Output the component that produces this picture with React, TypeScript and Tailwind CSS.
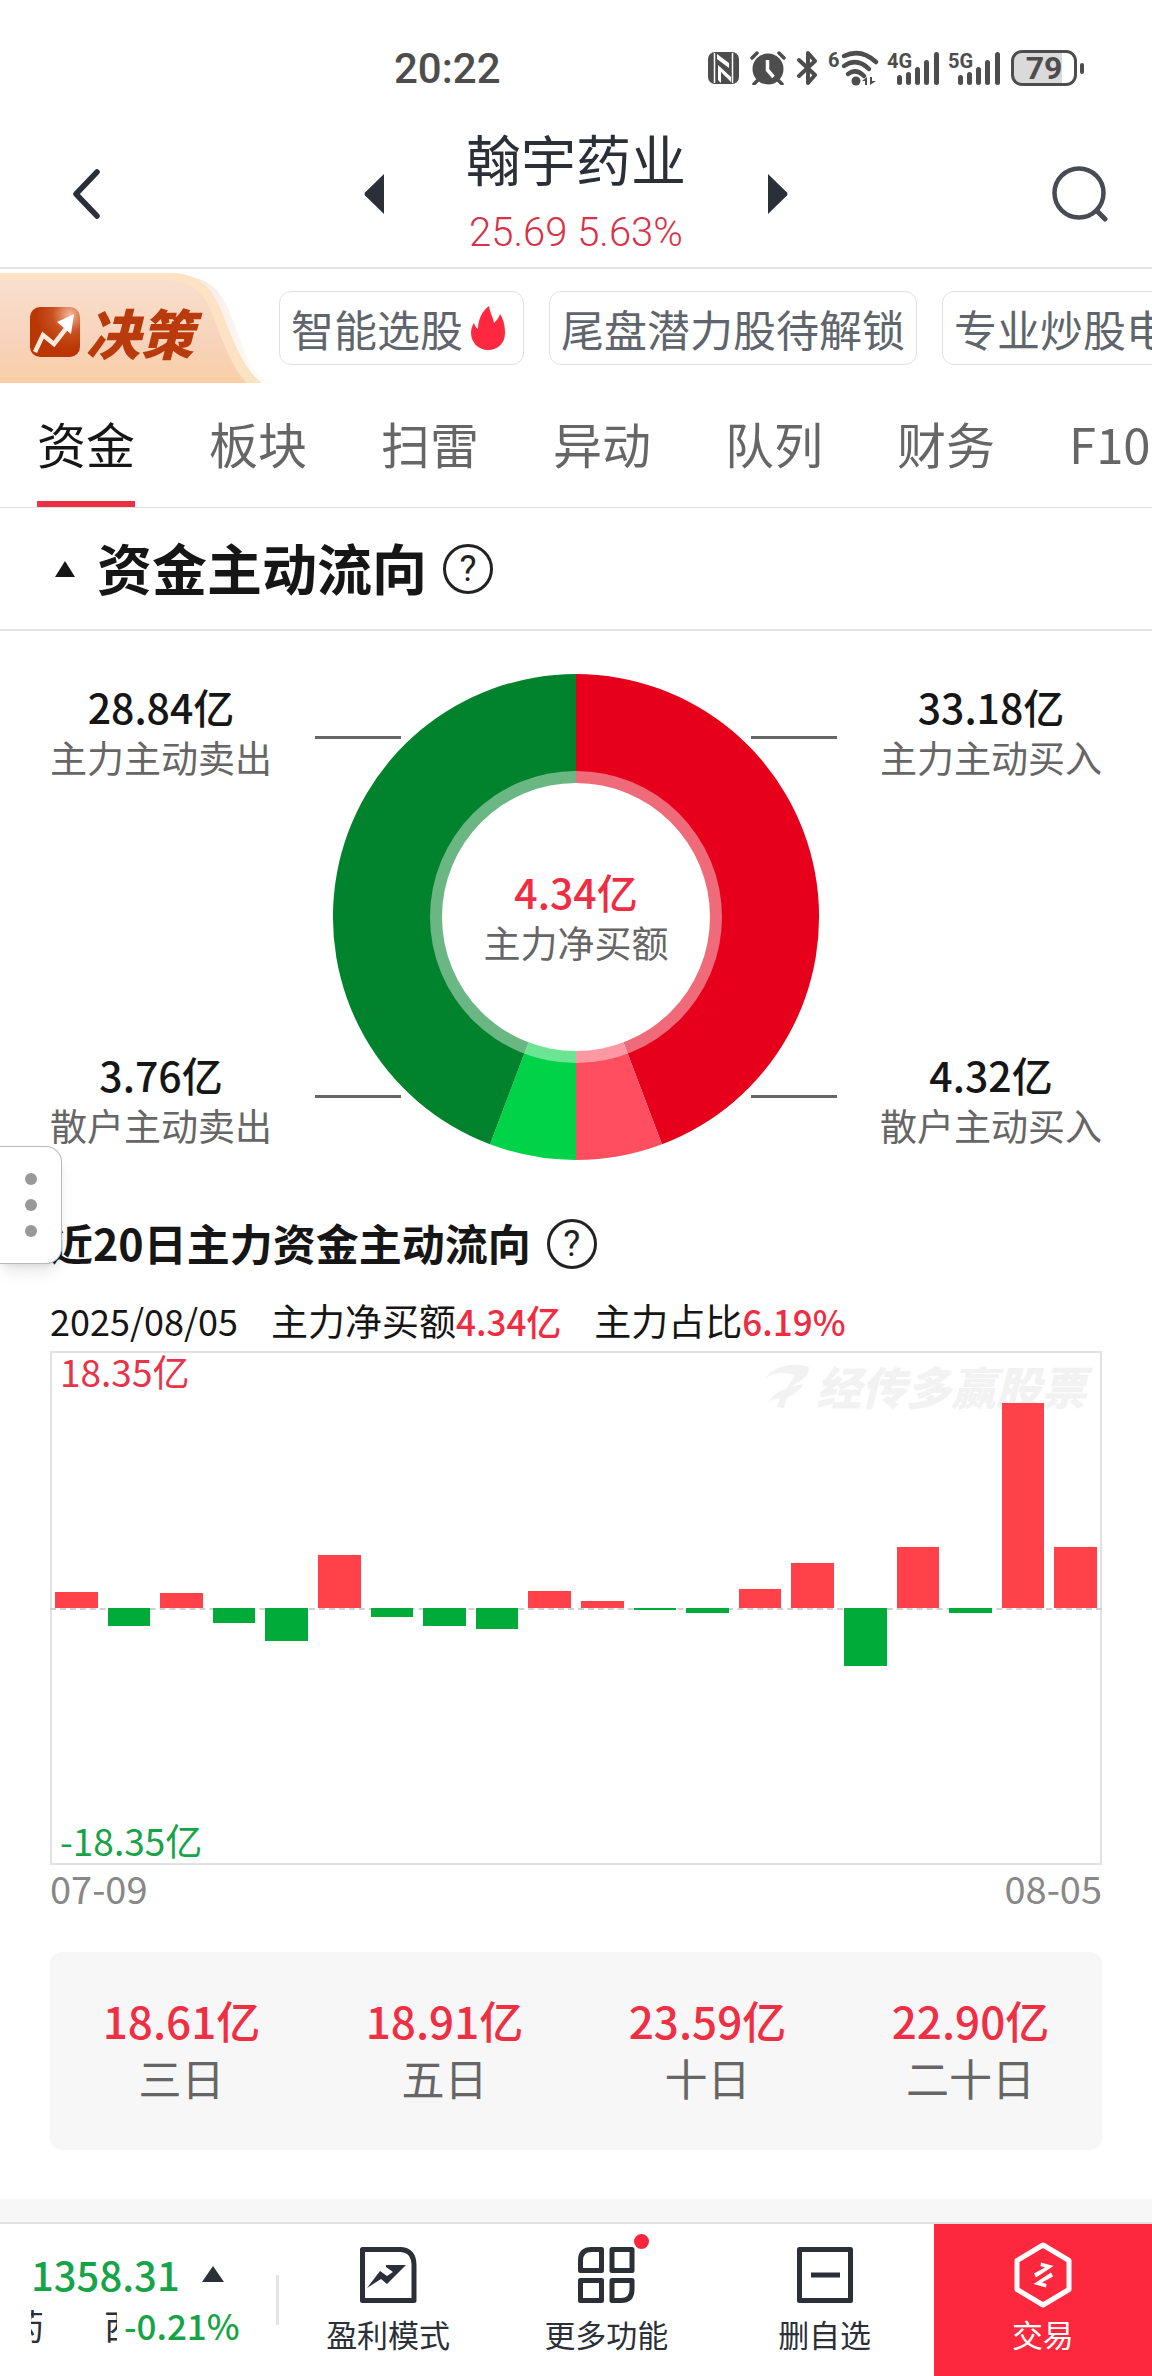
import { ReactNode } from "react";

const PROMOS = [
  { label: "智能选股", hot: true },
  { label: "尾盘潜力股待解锁", hot: false },
  { label: "专业炒股电脑版", hot: false },
];

const TABS = ["资金", "板块", "扫雷", "异动", "队列", "财务", "F10"];

// daily net inflow in 亿, oldest first
const FLOWS = [
  1.15, -1.3, 1.1, -1.05, -2.35, 3.78, -0.65, -1.25, -1.5, 1.24, 0.5, -0.15,
  -0.33, 1.38, 3.24, -4.15, 4.36, -0.35, 14.62, 4.34,
];
const FLOW_MAX = 18.35;

const TOTALS = [
  { value: "18.61亿", label: "三日" },
  { value: "18.91亿", label: "五日" },
  { value: "23.59亿", label: "十日" },
  { value: "22.90亿", label: "二十日" },
];

function SignalBars({ network }: { network: string }) {
  return (
    <svg viewBox="0 0 50 35" className="h-[35px] w-[50px] overflow-visible" fill="#4d4d4d" aria-hidden="true">
      <text x="-2" y="17" fontSize="20" fontWeight="700">{network}</text>
      <rect x="8" y="24" width="5" height="10" rx="2.5" />
      <rect x="17" y="21" width="5" height="13" rx="2.5" />
      <rect x="26" y="16" width="5" height="18" rx="2.5" />
      <rect x="35" y="9" width="5" height="25" rx="2.5" />
      <rect x="45" y="1" width="5" height="33" rx="2.5" />
    </svg>
  );
}

function StatusBar() {
  return (
    <div className="flex h-[110px] items-center justify-between pt-[26px] pr-[68px] pl-[394px] font-['Roboto',sans-serif] text-[#4d4d4d]">
      <span className="text-[42px] font-medium">20:22</span>
      <div className="flex items-center gap-[11px]">
        <svg viewBox="0 0 31 32" className="h-8 w-[31px]" aria-hidden="true">
          <rect width="31" height="32" rx="7" fill="#4d4d4d" />
          <path d="M6.500 1v30M24.500 1v30" stroke="#fff" strokeWidth="1.500" />
          <path d="M9 2l12 9v5L9 7zM10 13l13 12v5L13 20v11l-3-3z" fill="#fff" />
        </svg>
        <svg viewBox="0 0 36 34" className="h-[34px] w-9" aria-hidden="true">
          <circle cx="18" cy="18" r="15.500" fill="#4d4d4d" />
          <path d="M2 7l5-5M34 7l-5-5M8 29l-4 4M28 29l4 4" stroke="#4d4d4d" strokeWidth="3.500" strokeLinecap="round" />
          <path d="M17.500 9v10l6 7" fill="none" stroke="#fff" strokeWidth="3.500" />
        </svg>
        <svg viewBox="0 0 22 34" className="h-[34px] w-[22px]" aria-hidden="true">
          <path d="M2 9l16 15-7 8V2l7 8L2 25" fill="none" stroke="#4d4d4d" strokeWidth="4" strokeLinejoin="round" strokeLinecap="round" />
        </svg>
        <svg viewBox="0 0 48 36" className="h-9 w-12 overflow-visible" aria-hidden="true">
          <text x="-2" y="17" fontSize="20" fontWeight="700" fill="#4d4d4d">6</text>
          <g fill="none" stroke="#4d4d4d" strokeWidth="4.500" strokeLinecap="round">
            <path d="M14 6q17-8 32 6" />
            <path d="M14 16q13-9 25 3" />
            <path d="M18 24q8-6 16 2" />
          </g>
          <circle cx="26" cy="31" r="4.500" fill="#4d4d4d" />
          <path d="M32 31l5-4v8h-2v-4zM40 35v-8h2v4h4z" fill="#4d4d4d" />
        </svg>
        <SignalBars network="4G" />
        <SignalBars network="5G" />
        <div className="flex items-center gap-[3px]">
          <span className="flex h-9 w-[66px] items-center justify-center rounded-[11px] border-[3px] border-[#4d4d4d] bg-linear-to-r from-[#dadada] from-80% to-white to-80% text-[32px] font-bold">
            79
          </span>
          <span className="h-[11px] w-1 rounded-full bg-[#4d4d4d]" />
        </div>
      </div>
    </div>
  );
}

function Header() {
  return (
    <header className="flex items-center justify-between border-b-2 border-[#e4e4e4] px-[44px] pt-3 pb-px">
      <button aria-label="返回" className="flex w-14 justify-end">
        <svg viewBox="0 0 28 50" className="h-[50px] w-7" fill="none" stroke="#2b3038" strokeWidth="5.500">
          <path d="M25 3L4 25l21 22" strokeLinecap="round" strokeLinejoin="round" />
        </svg>
      </button>
      <div className="flex items-center gap-[82px]">
        <button aria-label="上一只">
          <svg viewBox="0 0 20 40" className="h-10 w-5" fill="#2b3038">
            <path d="M20 0v40L1 21.500q-1-1.500 0-3z" />
          </svg>
        </button>
        <div className="text-center">
          <h1 className="text-[55px] leading-[70px] text-[#2b3038]">翰宇药业</h1>
          <p className="mt-2 font-['Roboto',sans-serif] text-[40px] leading-[66px] font-light text-[#d8324a]">
            25.69 5.63%
          </p>
        </div>
        <button aria-label="下一只">
          <svg viewBox="0 0 20 40" className="h-10 w-5" fill="#2b3038">
            <path d="M0 0v40l19-18.500q1-1.500 0-3z" />
          </svg>
        </button>
      </div>
      <button aria-label="搜索">
        <svg viewBox="0 0 56 56" className="size-14" fill="none" stroke="#484a54" strokeWidth="4.500">
          <circle cx="27" cy="27" r="24.500" />
          <path d="M45 45l8 8" strokeWidth="5" strokeLinecap="round" />
        </svg>
      </button>
    </header>
  );
}

function PromoStrip() {
  return (
    <div className="flex items-center overflow-hidden pt-1">
      <a href="#decision" className="relative mr-[5px] flex h-[110px] w-[274px] shrink-0 items-center gap-1.5 pt-2 pl-[30px]">
        <svg viewBox="0 0 274 110" className="absolute inset-0 h-full w-full" aria-hidden="true">
          <defs>
            <linearGradient id="tab" x1="0" y1="0" x2="0" y2="1">
              <stop offset="0" stopColor="#f8dfcd" />
              <stop offset="0.600" stopColor="#f8d3bb" />
              <stop offset="1" stopColor="#f8cfa6" />
            </linearGradient>
            <linearGradient id="glow" x1="0" y1="0" x2="1" y2="0">
              <stop offset="0" stopColor="#f3e7e0" />
              <stop offset="1" stopColor="#fff" />
            </linearGradient>
          </defs>
          <path d="M190 4c32 4 38 30 52 68 8 22 16 34 32 38h-20L180 8z" fill="url(#glow)" />
          <path d="M0 0h175c28 2 40 20 48 42 10 26 22 56 39 68H0z" fill="#fde2c3" />
          <path d="M0 7h168c28 2 38 18 45 36 10 26 20 54 34 67H0z" fill="url(#tab)" />
        </svg>
        <svg viewBox="0 0 50 50" className="relative size-[50px]" aria-hidden="true">
          <defs>
            <radialGradient id="mark" cx="0.800" cy="0.150" r="0.700">
              <stop offset="0" stopColor="#f5b795" />
              <stop offset="0.500" stopColor="#c8501f" />
              <stop offset="1" stopColor="#ba3605" />
            </radialGradient>
          </defs>
          <rect width="50" height="50" rx="10" fill="url(#mark)" />
          <path d="M5 45l8-17 11 9 14-18" fill="none" stroke="#fde9dc" strokeWidth="4.500" />
          <path d="M27 15l17-8-3 20z" fill="#fff" />
        </svg>
        <span className="relative text-[54px] leading-[60px] font-black text-[#b93a0c] italic">决策</span>
      </a>
      <div className="flex gap-[25px]">
        {PROMOS.map((promo) => (
          <a
            key={promo.label}
            href="#promo"
            className="flex h-[74px] shrink-0 items-center rounded-xl border border-[#e2e2e2] px-[11px] text-[43px] whitespace-nowrap text-[#5f656d]"
          >
            {promo.label}
            {promo.hot && (
              <svg viewBox="0 0 49 44" className="h-11 w-[49px]" aria-hidden="true">
                <path
                  d="M26 0c1 7 4 11 5 17 2-2 5-5 6-9 4 6 5 13 5 19 0 10-7 17-17 17S8 36 8 27c0-4 1-7 3-10 1 3 2 5 4 6 0-9 4-18 11-23z"
                  fill="#ff2840"
                />
              </svg>
            )}
          </a>
        ))}
      </div>
    </div>
  );
}

function Tabs() {
  return (
    <nav className="flex gap-[74px] overflow-hidden border-b border-[#e2e2e2] pl-[37px]">
      {TABS.map((tab, i) => (
        <button
          key={tab}
          className={
            i === 0
              ? "relative h-[124px] shrink-0 pb-1 text-[49px] text-[#161616]"
              : "h-[124px] shrink-0 pb-1 text-[49px] text-[#666]"
          }
        >
          {tab}
          {i === 0 && <span className="absolute inset-x-0 bottom-0 h-1.5 bg-[#ea3045]" />}
        </button>
      ))}
    </nav>
  );
}

function HelpButton() {
  return (
    <button
      aria-label="说明"
      className="flex size-[50px] items-center justify-center rounded-full border-[3px] border-[#222] font-['Roboto',sans-serif] text-[36px] leading-none text-[#222]"
    >
      ?
    </button>
  );
}

function Stat({ value, label }: { value: string; label: string }) {
  return (
    <div className="text-center leading-[51px]">
      <p className="text-[41px] font-medium text-[#161616]">{value}</p>
      <p className="text-[37px] text-[#666]">{label}</p>
    </div>
  );
}

function DonutChart() {
  return (
    <div className="flex justify-between px-[50px] pt-[42px]">
      <div className="flex flex-col justify-between pt-2 pb-2.5">
        <Stat value="28.84亿" label="主力主动卖出" />
        <Stat value="3.76亿" label="散户主动卖出" />
      </div>
      <div className="relative">
        <svg viewBox="0 0 522 488" className="h-[488px] w-[522px]" aria-hidden="true">
          <path d="M0 64.500h86M436 64.500h86M0 423.500h86M436 423.500h86" stroke="#666" strokeWidth="3" />
          <path d="M261 244V1a243 243 0 0 1 86 470.300z" fill="#e6001b" />
          <path d="M261 244l86 227.300A243 243 0 0 1 261 487z" fill="#ff4e60" />
          <path d="M261 244v243a243 243 0 0 1-86-15.700z" fill="#00d348" />
          <path d="M261 244l-86 227.300A243 243 0 0 1 261 1z" fill="#00832c" />
          <circle cx="261" cy="244" r="146" fill="#fff" fillOpacity="0.420" />
          <circle cx="261" cy="244" r="134" fill="#fff" />
        </svg>
        <div className="absolute inset-0 flex flex-col items-center justify-center leading-[51px]">
          <p className="text-[41px] font-medium text-[#f02c42]">4.34亿</p>
          <p className="text-[37px] text-[#666]">主力净买额</p>
        </div>
      </div>
      <div className="flex flex-col justify-between pt-2 pb-2.5">
        <Stat value="33.18亿" label="主力主动买入" />
        <Stat value="4.32亿" label="散户主动买入" />
      </div>
    </div>
  );
}

function FlowChart() {
  return (
    <div className="relative h-[514px]">
      <div className="absolute inset-0 border-2 border-[#e2e2e2]" />
      <div className="absolute top-2.5 right-4 flex items-center gap-1.5 text-[#f2f2f2]">
        <svg viewBox="0 0 46 46" className="size-[46px]" fill="currentColor" aria-hidden="true">
          <path d="M1 16C8 4 26-2 45 4c1 8-8 15-18 19 5 0 8-1 12-2-4 9-12 11-16 14l-3 10-7-1 3-9c-4 1-8 1-11 4 4-8 11-11 18-14l8-13C19 9 9 9 1 16z" />
        </svg>
        <span className="text-[45px] leading-[50px] font-black italic">经传多赢股票</span>
      </div>
      <div className="absolute inset-x-0 top-1/2 border-t-2 border-dashed border-[#d0d0d0]" />
      <div className="relative flex h-full">
        {FLOWS.map((v, i) => (
          <div key={i} className="flex flex-1 flex-col px-[5px]">
            <div className="flex flex-1 flex-col justify-end">
              {v > 0 && <div className="bg-[#ff424a]" style={{ height: `${(v / FLOW_MAX) * 100}%` }} />}
            </div>
            <div className="flex-1">
              {v < 0 && <div className="bg-[#00ab3a]" style={{ height: `${(-v / FLOW_MAX) * 100}%` }} />}
            </div>
          </div>
        ))}
      </div>
      <span className="absolute top-0 left-2.5 text-[37px] leading-[40px] text-[#e93348]">18.35亿</span>
      <span className="absolute bottom-0 left-2.5 text-[37px] leading-[50px] text-[#17a348]">-18.35亿</span>
    </div>
  );
}

function RecentFlow() {
  return (
    <section className="px-[50px]">
      <div className="mt-[58px] flex items-center gap-4">
        <h2 className="pb-1 text-[43px] leading-[46px] font-bold text-[#161616]">近20日主力资金主动流向</h2>
        <HelpButton />
      </div>
      <div className="mt-[23px] mb-0.5 flex items-baseline gap-[33px] text-[37px] leading-[56px] text-[#161616]">
        <span className="text-[36px]">2025/08/05</span>
        <span>
          主力净买额<span className="text-[35px] font-medium text-[#f02c42]">4.34亿</span>
        </span>
        <span>
          主力占比<span className="text-[35px] font-medium text-[#f02c42]">6.19%</span>
        </span>
      </div>
      <FlowChart />
      <div className="flex justify-between text-[38px] leading-[46px] text-[#888]">
        <span>07-09</span>
        <span>08-05</span>
      </div>
      <div className="mt-[41px] grid grid-cols-4 rounded-xl bg-[#f7f7f7] pt-10 pb-11 text-center leading-[57px]">
        {TOTALS.map((t) => (
          <div key={t.label}>
            <p className="text-[44px] font-medium text-[#ee2f44]">{t.value}</p>
            <p className="text-[43px] text-[#666]">{t.label}</p>
          </div>
        ))}
      </div>
    </section>
  );
}

function Action({ label, dot, children }: { label: string; dot?: boolean; children: ReactNode }) {
  return (
    <button className="flex flex-1 flex-col items-center gap-1.5 pt-[18px] text-[31px] leading-10 text-[#2b3038]">
      <span className="relative">
        <svg viewBox="0 0 58 66" className="h-[66px] w-[58px]" fill="none" stroke="currentColor" strokeWidth="5" strokeLinejoin="round">
          {children}
        </svg>
        {dot && <span className="absolute -top-2 -right-3.5 size-[15px] rounded-full bg-[#f8263c]" />}
      </span>
      {label}
    </button>
  );
}

function BottomBar() {
  return (
    <footer className="flex h-[154px] border-t-2 border-[#e2e2e2]">
      <div className="flex w-[279px] items-center justify-between">
        <div className="pb-0.5 pl-[31px]">
          <div className="flex items-center gap-[22px] text-[40px] leading-[52px] font-medium text-[#17a348]">
            1358.31
            <svg viewBox="0 0 22 16" className="h-4 w-[22px]" fill="#2b3038" aria-hidden="true">
              <path d="M11 0l11 16H0z" />
            </svg>
          </div>
          <div className="flex gap-[7px] text-[35px] leading-[50px]">
            {/* scrolling index name, mid-scroll */}
            <div className="flex w-[86px] justify-center gap-[60px] overflow-hidden text-[#2b3038]">
              <span className="shrink-0">药</span>
              <span className="shrink-0">西</span>
            </div>
            <span className="font-medium text-[#17a348]">-0.21%</span>
          </div>
        </div>
        <div className="h-[50px] w-[3px] bg-[#e4e4e4]" />
      </div>
      <Action label="盈利模式">
        <path d="M3.500 7.500H42q13 1 13 16v35H3.500z" />
        <path d="M8 46L21 29l7 5 6-4-7-5v-2h20L28 42l-6-5z" fill="currentColor" stroke="none" />
      </Action>
      <Action label="更多功能" dot>
        <path d="M3.500 28.500v-10q0-11 11-11h10v21zM35 7.500h20v21H35zM3.500 38.500h21v20h-21zM35 38.500h20v9q0 11-11 11h-9z" />
      </Action>
      <Action label="删自选">
        <path d="M3.500 7.500h51v51h-51zM15 33h29" />
      </Action>
      <button className="flex flex-1 flex-col items-center gap-1.5 bg-[#fd283e] pt-[18px] text-[31px] leading-10 text-white">
        <svg viewBox="0 0 58 66" className="h-[66px] w-[58px]" aria-hidden="true">
          <path d="M29 3l26 15.500v29L29 63 3 47.500v-29z" fill="none" stroke="#fff" strokeWidth="5" strokeLinejoin="round" />
          <path d="M27 20.500L39.500 24 22 35.500l-2-4 11-6-4.500-1.500zM32 45.500L19.500 42 37 30.500l2 4-11 6 4.500 1.500z" fill="#fff" />
        </svg>
        交易
      </button>
    </footer>
  );
}

export default function App() {
  return (
    <div className="relative bg-white font-['Noto_Sans_CJK_SC',sans-serif]">
      <StatusBar />
      <Header />
      <PromoStrip />
      <Tabs />
      <main>
        <div className="flex h-[123px] items-center gap-4 border-b-2 border-[#e4e4e4] pl-[55px]">
          <button aria-label="收起" className="mr-1.5">
            <svg viewBox="0 0 20 16" className="h-4 w-5" fill="#161616">
              <path d="M10 0l10 16H0z" />
            </svg>
          </button>
          <h2 className="pb-1 text-[55px] font-bold text-[#161616]">资金主动流向</h2>
          <HelpButton />
        </div>
        <DonutChart />
        <RecentFlow />
        <div className="mt-[49px] h-[23px] bg-[#f7f7f7]" />
      </main>
      <BottomBar />
      <button
        aria-label="更多"
        className="absolute top-[1146px] left-0 flex h-[118px] w-[62px] flex-col items-center justify-center gap-3.5 rounded-r-2xl border border-l-0 border-[#b8b8b8] bg-white shadow-lg"
      >
        <span className="size-3 rounded-full bg-[#999]" />
        <span className="size-3 rounded-full bg-[#999]" />
        <span className="size-3 rounded-full bg-[#999]" />
      </button>
    </div>
  );
}
